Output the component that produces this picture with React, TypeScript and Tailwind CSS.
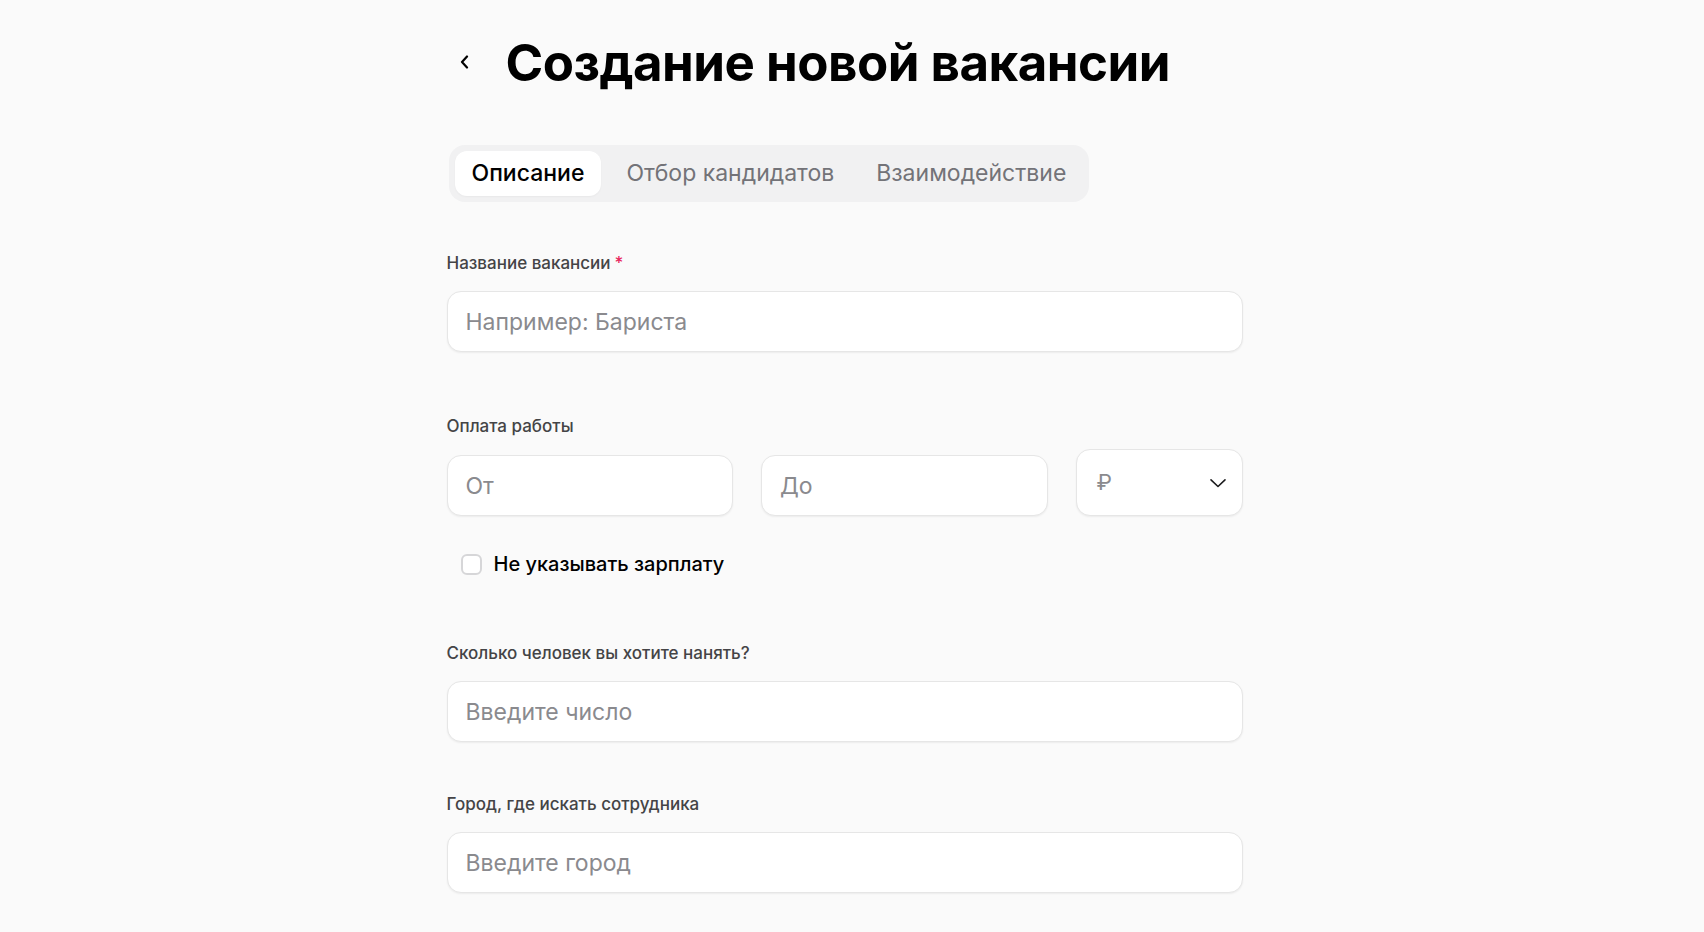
import { useState } from "react";

const tabs = ["Описание", "Отбор кандидатов", "Взаимодействие"];

const inputCls =
  "w-full h-[61px] rounded-[14px] border border-[#e6e6e6] bg-white px-[18px] text-[23px] text-black placeholder-[#8a8a8e] shadow-[0_1px_2px_rgba(0,0,0,0.06)] focus:outline-none";

const Label = ({ children, required }: { children: React.ReactNode; required?: boolean }) => (
  <label className="block text-[17px] leading-5 font-medium text-[#444446]">
    {children}
    {required && <span className="ml-1 text-[#e8265e]">*</span>}
  </label>
);

export default function App() {
  const [active, setActive] = useState(0);
  const [hideSalary, setHideSalary] = useState(false);

  return (
    <div className="min-h-screen bg-[#fafafa] font-['Inter',sans-serif] pr-[15px]">
      <div className="mx-auto w-[796px]">
        {/* header */}
        <div className="flex items-center pt-[28px] h-[96px]">
          <button className="flex w-[59px] items-center pl-[12px] text-black">
            <svg width="12" height="14" viewBox="0 0 12 14" fill="none">
              <path d="M8 1.5L3 7l5 5.5" stroke="currentColor" strokeWidth="2.2" strokeLinecap="round" strokeLinejoin="round" />
            </svg>
          </button>
          <h1 className="text-[51px] leading-none font-bold tracking-[-0.01em] text-black">Создание новой вакансии</h1>
        </div>

        {/* tabs */}
        <div className="mt-[49px] ml-[2px] inline-flex gap-[8px] rounded-[16px] bg-[#f1f1f2] p-[6px]">
          {tabs.map((t, i) => (
            <button
              key={t}
              onClick={() => setActive(i)}
              className={
                i === active
                  ? "h-[45px] rounded-[12px] bg-white px-[17px] text-[23px] font-medium text-black shadow-[0_1px_2px_rgba(0,0,0,0.04)]"
                  : "h-[45px] rounded-[12px] px-[17px] text-[23px] text-[#737378]"
              }
            >
              {t}
            </button>
          ))}
        </div>

        {/* form */}
        <form className="mt-[51px]">
          <Label required>Название вакансии</Label>
          <input className={`${inputCls} mt-[18px]`} placeholder="Например: Бариста" />

          <div className="mt-[64px]">
            <Label>Оплата работы</Label>
            <div className="mt-[13px] flex items-end gap-[28px]">
              <input className={`${inputCls} w-[288px]`} placeholder="От" />
              <input className={`${inputCls} w-[286px]`} placeholder="До" />
              <button
                type="button"
                className="flex h-[67px] w-[167px] shrink-0 items-center justify-between rounded-[14px] border border-[#e6e6e6] bg-white pl-[20px] pr-[15px] text-[22px] text-[#8a8a8e] shadow-[0_1px_2px_rgba(0,0,0,0.06)]"
              >
                <span>₽</span>
                <svg width="18" height="10" viewBox="0 0 18 10" fill="none">
                  <path d="M2 1.8l7 6.7 7-6.7" stroke="#1c1c1e" strokeWidth="1.6" strokeLinecap="round" strokeLinejoin="round" />
                </svg>
              </button>
            </div>
          </div>

          <label className="mt-[36px] flex items-center gap-[12px] pl-[14px] cursor-pointer">
            <input
              type="checkbox"
              checked={hideSalary}
              onChange={(e) => setHideSalary(e.target.checked)}
              className="h-[21px] w-[21px] appearance-none rounded-[6px] border-2 border-[#d6d6d8] bg-white checked:bg-black checked:border-black"
            />
            <span className="text-[20px] leading-6 font-medium text-black">Не указывать зарплату</span>
          </label>

          <div className="mt-[67px]">
            <Label>Сколько человек вы хотите нанять?</Label>
            <input className={`${inputCls} mt-[18px]`} placeholder="Введите число" />
          </div>

          <div className="mt-[52px]">
            <Label>Город, где искать сотрудника</Label>
            <input className={`${inputCls} mt-[18px]`} placeholder="Введите город" />
          </div>
        </form>
      </div>
    </div>
  );
}
